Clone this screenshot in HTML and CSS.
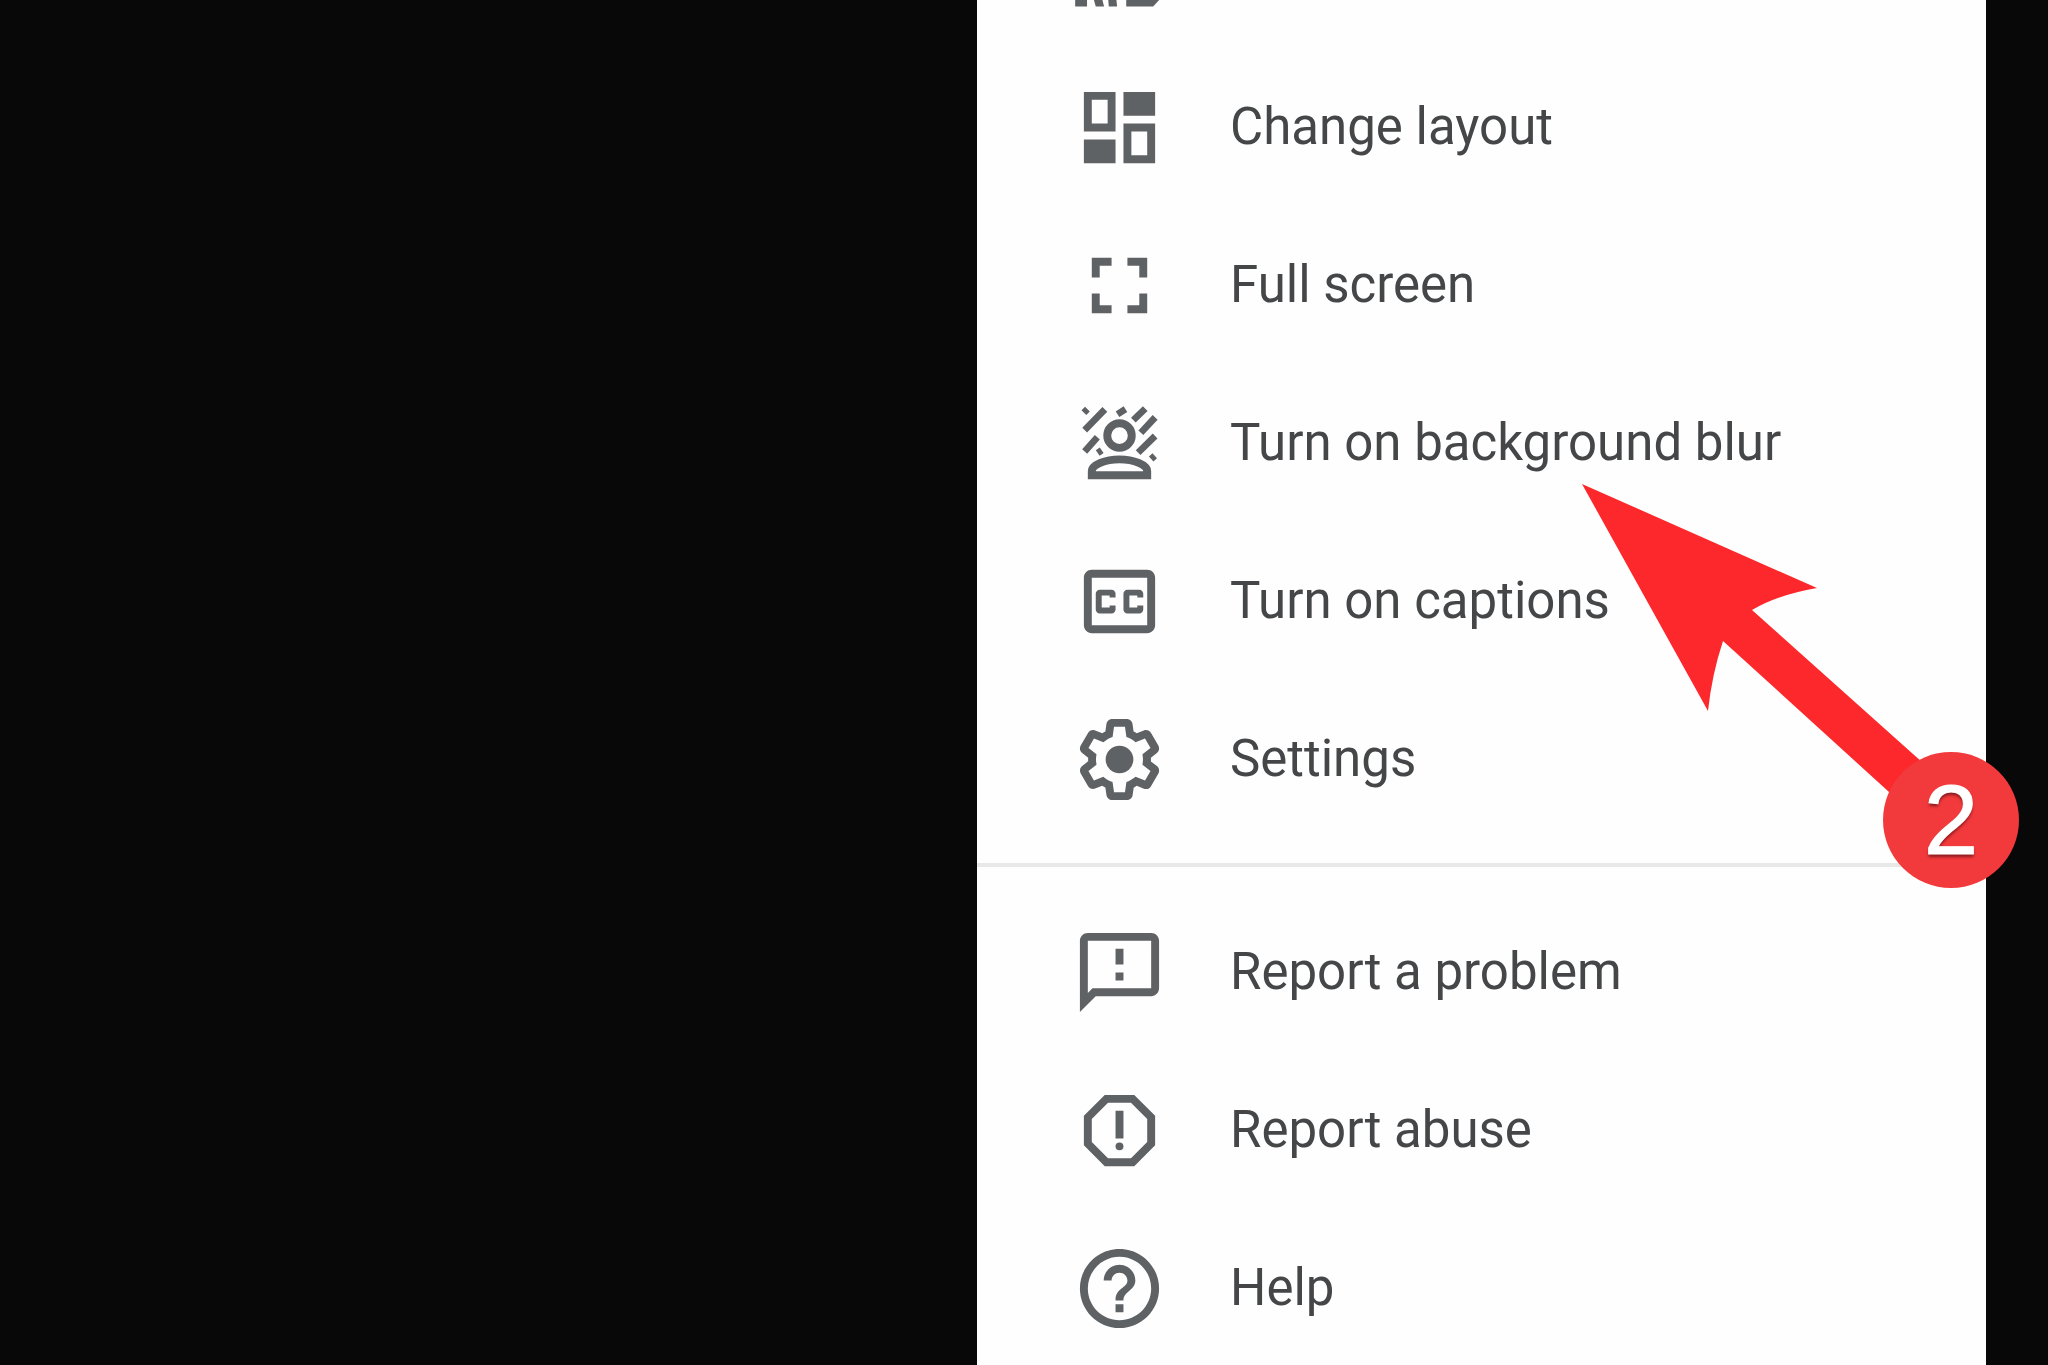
FILE: index.html
```html
<!DOCTYPE html>
<html lang="en">
<head>
<meta charset="utf-8">
<title>Meeting options</title>
<link rel="stylesheet" href="styles.css">
</head>
<body>
<main class="stage">
  <nav class="menu" aria-label="More options">
    <ul class="group">
      <li><button class="item clipped" type="button" aria-label="Whiteboard">
        <svg class="icon" viewBox="0 0 24 24"><path d="M.8 18h3v3.600h-3zM5 18h2.200l.9 3.600H6zM9 18h2l.4 3.600H9.300zM13.700 18h9v1.200l-2.200 2.400h-6.800z"/></svg>
      </button></li>
      <li><button class="item" type="button">
        <svg class="icon" viewBox="0 0 24 24"><path d="M3 13h8V3H3zm2-8h4v6H5zM3 21h8v-6H3zM13 21h8V11h-8zm2-8h4v6h-4zM13 3v6h8V3z"/></svg>
        <span>Change layout</span>
      </button></li>
      <li><button class="item" type="button">
        <svg class="icon" viewBox="0 0 24 24"><path d="M7 14H5v5h5v-2H7zM5 10h2V7h3V5H5zM17 17h-3v2h5v-5h-2zM14 5v2h3v3h2V5z"/></svg>
        <span>Full screen</span>
      </button></li>
      <li><button class="item" type="button">
        <svg class="icon" viewBox="0 0 24 24"><g class="line"><circle cx="12" cy="10" r="3.100"/><path d="M5 20h14v-1c0-1.600-3.400-3-7-3s-7 1.400-7 3z"/></g><path class="stripes" d="M3.200 8.600l5.100-5.200M3.200 14l3.200-3.600M11.500 4.600l2-1.300M15.500 6.100l3-2.900M17.400 9.300l3.600-3.900M16.700 14.300l4.300-4.200M3 4.200l.9-.9M6.500 14.400l1-.7M20 15.900l.9-.8"/></svg>
        <span>Turn on background blur</span>
      </button></li>
      <li><button class="item" type="button">
        <svg class="icon" viewBox="0 0 24 24"><path d="M19 4H5c-1.110 0-2 .9-2 2v12c0 1.100.890 2 2 2h14c1.100 0 2-.9 2-2V6c0-1.100-.9-2-2-2zm0 14H5V6h14zM7 15h3c.550 0 1-.450 1-1v-1H9.500v.5h-2v-3h2v.5H11v-1c0-.550-.450-1-1-1H7c-.550 0-1 .450-1 1v4c0 .550.450 1 1 1zm7 0h3c.550 0 1-.450 1-1v-1h-1.500v.5h-2v-3h2v.5H18v-1c0-.550-.450-1-1-1h-3c-.550 0-1 .450-1 1v4c0 .550.450 1 1 1z"/></svg>
        <span>Turn on captions</span>
      </button></li>
      <li><button class="item" type="button">
        <svg class="icon" viewBox="0 0 24 24"><path d="M13.850 22.250h-3.700c-.740 0-1.360-.540-1.450-1.270l-.270-1.890c-.270-.140-.530-.290-.790-.460l-1.800.720c-.7.260-1.470-.030-1.810-.650L2.200 15.530c-.350-.660-.2-1.440.360-1.880l1.530-1.190c-.010-.150-.020-.3-.020-.460 0-.150.010-.310.020-.460l-1.520-1.190c-.590-.450-.740-1.260-.370-1.880l1.850-3.190c.340-.620 1.110-.9 1.790-.630l1.810.730c.260-.170.520-.320.780-.460l.270-1.910c.090-.7.710-1.250 1.440-1.250h3.700c.740 0 1.360.540 1.450 1.270l.270 1.890c.270.140.530.290.790.460l1.800-.720c.710-.260 1.480.030 1.820.650l1.840 3.180c.360.660.2 1.440-.360 1.880l-1.520 1.190c.010.150.020.3.020.460s-.010.310-.020.460l1.520 1.190c.560.450.720 1.230.370 1.860l-1.860 3.220c-.340.620-1.110.9-1.800.630l-1.800-.720c-.260.170-.520.320-.780.460l-.270 1.910c-.1.680-.720 1.220-1.460 1.220zm-3.230-2h2.760l.370-2.550.530-.220c.440-.180.880-.440 1.340-.780l.450-.340 2.380.960 1.380-2.400-2.030-1.580.070-.560c.030-.260.060-.510.060-.780s-.030-.530-.060-.780l-.070-.560 2.030-1.580-1.390-2.400-2.390.960-.450-.350c-.420-.320-.870-.580-1.330-.770l-.520-.220-.370-2.550h-2.760l-.370 2.550-.530.210c-.440.190-.880.440-1.340.790l-.450.330-2.380-.950-1.390 2.390 2.030 1.580-.070.560a7 7 0 0 0-.060.790c0 .260.020.530.060.780l.070.560-2.030 1.580 1.380 2.400 2.390-.960.450.350c.430.330.860.580 1.330.770l.530.220z"/><circle cx="12" cy="12" r="3.500"/></svg>
        <span>Settings</span>
      </button></li>
    </ul>
    <hr class="divider">
    <ul class="group">
      <li><button class="item" type="button">
        <svg class="icon" viewBox="0 0 24 24"><path d="M20 2H4c-1.100 0-2 .9-2 2v18l4-4h14c1.100 0 2-.9 2-2V4c0-1.100-.9-2-2-2zm0 14H5.170L4 17.170V4h16zM11 12h2v2h-2zm0-6h2v4h-2z"/></svg>
        <span>Report a problem</span>
      </button></li>
      <li><button class="item" type="button">
        <svg class="icon" viewBox="0 0 24 24"><path d="M15.730 3H8.270L3 8.270v7.460L8.270 21h7.460L21 15.730V8.270zM19 14.900L14.900 19H9.100L5 14.900V9.100L9.100 5h5.800L19 9.100zM11 7h2v7h-2z"/><circle cx="12" cy="16" r="1"/></svg>
        <span>Report abuse</span>
      </button></li>
      <li><button class="item" type="button">
        <svg class="icon" viewBox="0 0 24 24"><path d="M11 18h2v-2h-2zm1-16C6.480 2 2 6.480 2 12s4.480 10 10 10 10-4.480 10-10S17.520 2 12 2zm0 18c-4.410 0-8-3.590-8-8s3.590-8 8-8 8 3.590 8 8-3.590 8-8 8zm0-14c-2.210 0-4 1.790-4 4h2c0-1.100.9-2 2-2s2 .9 2 2c0 2-3 1.750-3 5h2c0-2.250 3-2.500 3-5 0-2.210-1.790-4-4-4z"/></svg>
        <span>Help</span>
      </button></li>
    </ul>
    <div class="callout">
      <svg class="arrow" viewBox="0 0 340 320" aria-hidden="true"><path d="M0 0L235 104Q195 111 170 126L350 287L318 318L141 157Q130 190 126 227Z"/></svg>
      <span class="badge">2</span>
    </div>
  </nav>
</main>
</body>
</html>
```
FILE: styles.css
```css
* { box-sizing: border-box; }

body {
  margin: 0;
  background: #080808;
  font-family: Roboto, "Liberation Sans", sans-serif;
  color: #444648;
}

.stage {
  display: grid;
  grid-template-columns: 977fr 1009fr 62fr;
  height: 100vh;
  overflow: hidden;
}

.menu {
  grid-column: 2;
  position: relative;
  align-self: start;
  min-height: 100vh;
  background: #fefefe;
}

.group {
  margin: 0;
  padding: 0;
  list-style: none;
}

.item {
  display: flex;
  align-items: center;
  gap: 63px;
  width: 100%;
  height: 158px;
  padding: 0 95px;
  border: 0;
  background: none;
  color: inherit;
  font: inherit;
  font-size: 51px;
  line-height: 64px;
  text-align: left;
  white-space: nowrap;
}

/* The list is scrolled: only the foot of the first row shows. */
.clipped {
  height: 48px;
  align-items: flex-end;
  padding-bottom: 32px;
}

.icon {
  flex: none;
  width: 95px;
  height: 95px;
  fill: #5f6265;
}

.line,
.stripes {
  fill: none;
  stroke: #5f6265;
  stroke-width: 2;
}

.stripes {
  stroke-width: 1.7;
}

.divider {
  height: 4px;
  margin: 25px 0 26px;
  border: 0;
  background: #e8e8e8;
}

.callout {
  position: absolute;
  top: 484px;
  right: -33px;
  width: 437px;
  height: 404px;
}

.arrow {
  position: absolute;
  top: 0;
  left: 0;
  width: 340px;
  height: 320px;
  overflow: visible;
  fill: #fd282b;
}

.badge {
  position: absolute;
  right: 0;
  bottom: 0;
  display: grid;
  place-items: center;
  width: 136px;
  height: 136px;
  border-radius: 50%;
  background: #f23a3c;
  color: #fff;
  font-family: "Liberation Sans", Arial, sans-serif;
  font-size: 98px;
  line-height: 136px;
  text-shadow: 0 3px 3px #8c1c20;
  -webkit-text-stroke: 1px #fff;
}
```
